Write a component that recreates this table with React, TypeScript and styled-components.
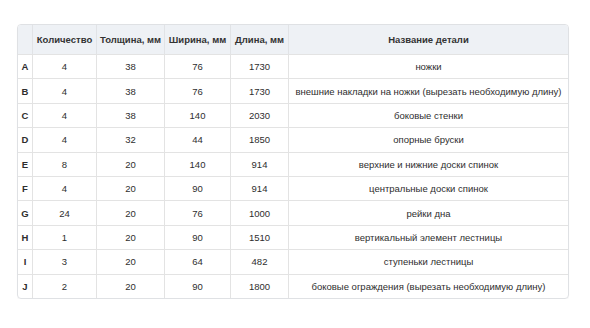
import { createGlobalStyle, styled } from "styled-components"

const Global = createGlobalStyle`
    body {
        margin: 0;
        background: #ffffff;
        font-family: "Liberation Sans", Arial, sans-serif;
        color: #333333;
    }
`

const Page = styled.div`
    padding: 24px 0 0 17px;
`

const Table = styled.table`
    width: 552px;
    table-layout: fixed;
    border-collapse: separate;
    border-spacing: 0;
    border: 1px solid #dfe1e4;
    border-radius: 4px;
    box-shadow: 0 1px 1px rgba(0, 0, 0, 0.04);
    overflow: hidden;
    font-size: 9.5px;
`

const HeadCell = styled.th`
    height: 29px;
    padding: 0;
    background: #eef1f5;
    font-weight: bold;
    text-align: center;
    color: #333333;
    border-left: 1px solid #e1e3e6;
    white-space: nowrap;

    &:first-child {
        border-left: 0;
    }
`

const Cell = styled.td<{ $bold?: boolean }>`
    height: 23.4px;
    padding: 0;
    text-align: center;
    border-top: 1px solid #e3e3e3;
    border-left: 1px solid #e3e3e3;
    font-weight: ${p => (p.$bold ? "bold" : "normal")};
    color: #2e2e2e;
    white-space: nowrap;

    &:first-child {
        border-left: 0;
    }
`

const rows: [string, string, string, string, string, string][] = [
    ["A", "4", "38", "76", "1730", "ножки"],
    ["B", "4", "38", "76", "1730", "внешние накладки на ножки (вырезать необходимую длину)"],
    ["C", "4", "38", "140", "2030", "боковые стенки"],
    ["D", "4", "32", "44", "1850", "опорные бруски"],
    ["E", "8", "20", "140", "914", "верхние и нижние доски спинок"],
    ["F", "4", "20", "90", "914", "центральные доски спинок"],
    ["G", "24", "20", "76", "1000", "рейки дна"],
    ["H", "1", "20", "90", "1510", "вертикальный элемент лестницы"],
    ["I", "3", "20", "64", "482", "ступеньки лестницы"],
    ["J", "2", "20", "90", "1800", "боковые ограждения (вырезать необходимую длину)"],
]

export default () => <>
    <Global />
    <Page>
        <Table>
            <colgroup>
                <col style={{ width: 14 }} />
                <col style={{ width: 64 }} />
                <col style={{ width: 68 }} />
                <col style={{ width: 66 }} />
                <col style={{ width: 58 }} />
                <col />
            </colgroup>
            <thead>
                <tr>
                    <HeadCell></HeadCell>
                    <HeadCell>Количество</HeadCell>
                    <HeadCell>Толщина, мм</HeadCell>
                    <HeadCell>Ширина, мм</HeadCell>
                    <HeadCell>Длина, мм</HeadCell>
                    <HeadCell>Название детали</HeadCell>
                </tr>
            </thead>
            <tbody>
                {rows.map(r => (
                    <tr key={r[0]}>
                        <Cell $bold>{r[0]}</Cell>
                        <Cell>{r[1]}</Cell>
                        <Cell>{r[2]}</Cell>
                        <Cell>{r[3]}</Cell>
                        <Cell>{r[4]}</Cell>
                        <Cell>{r[5]}</Cell>
                    </tr>
                ))}
            </tbody>
        </Table>
    </Page>
</>
